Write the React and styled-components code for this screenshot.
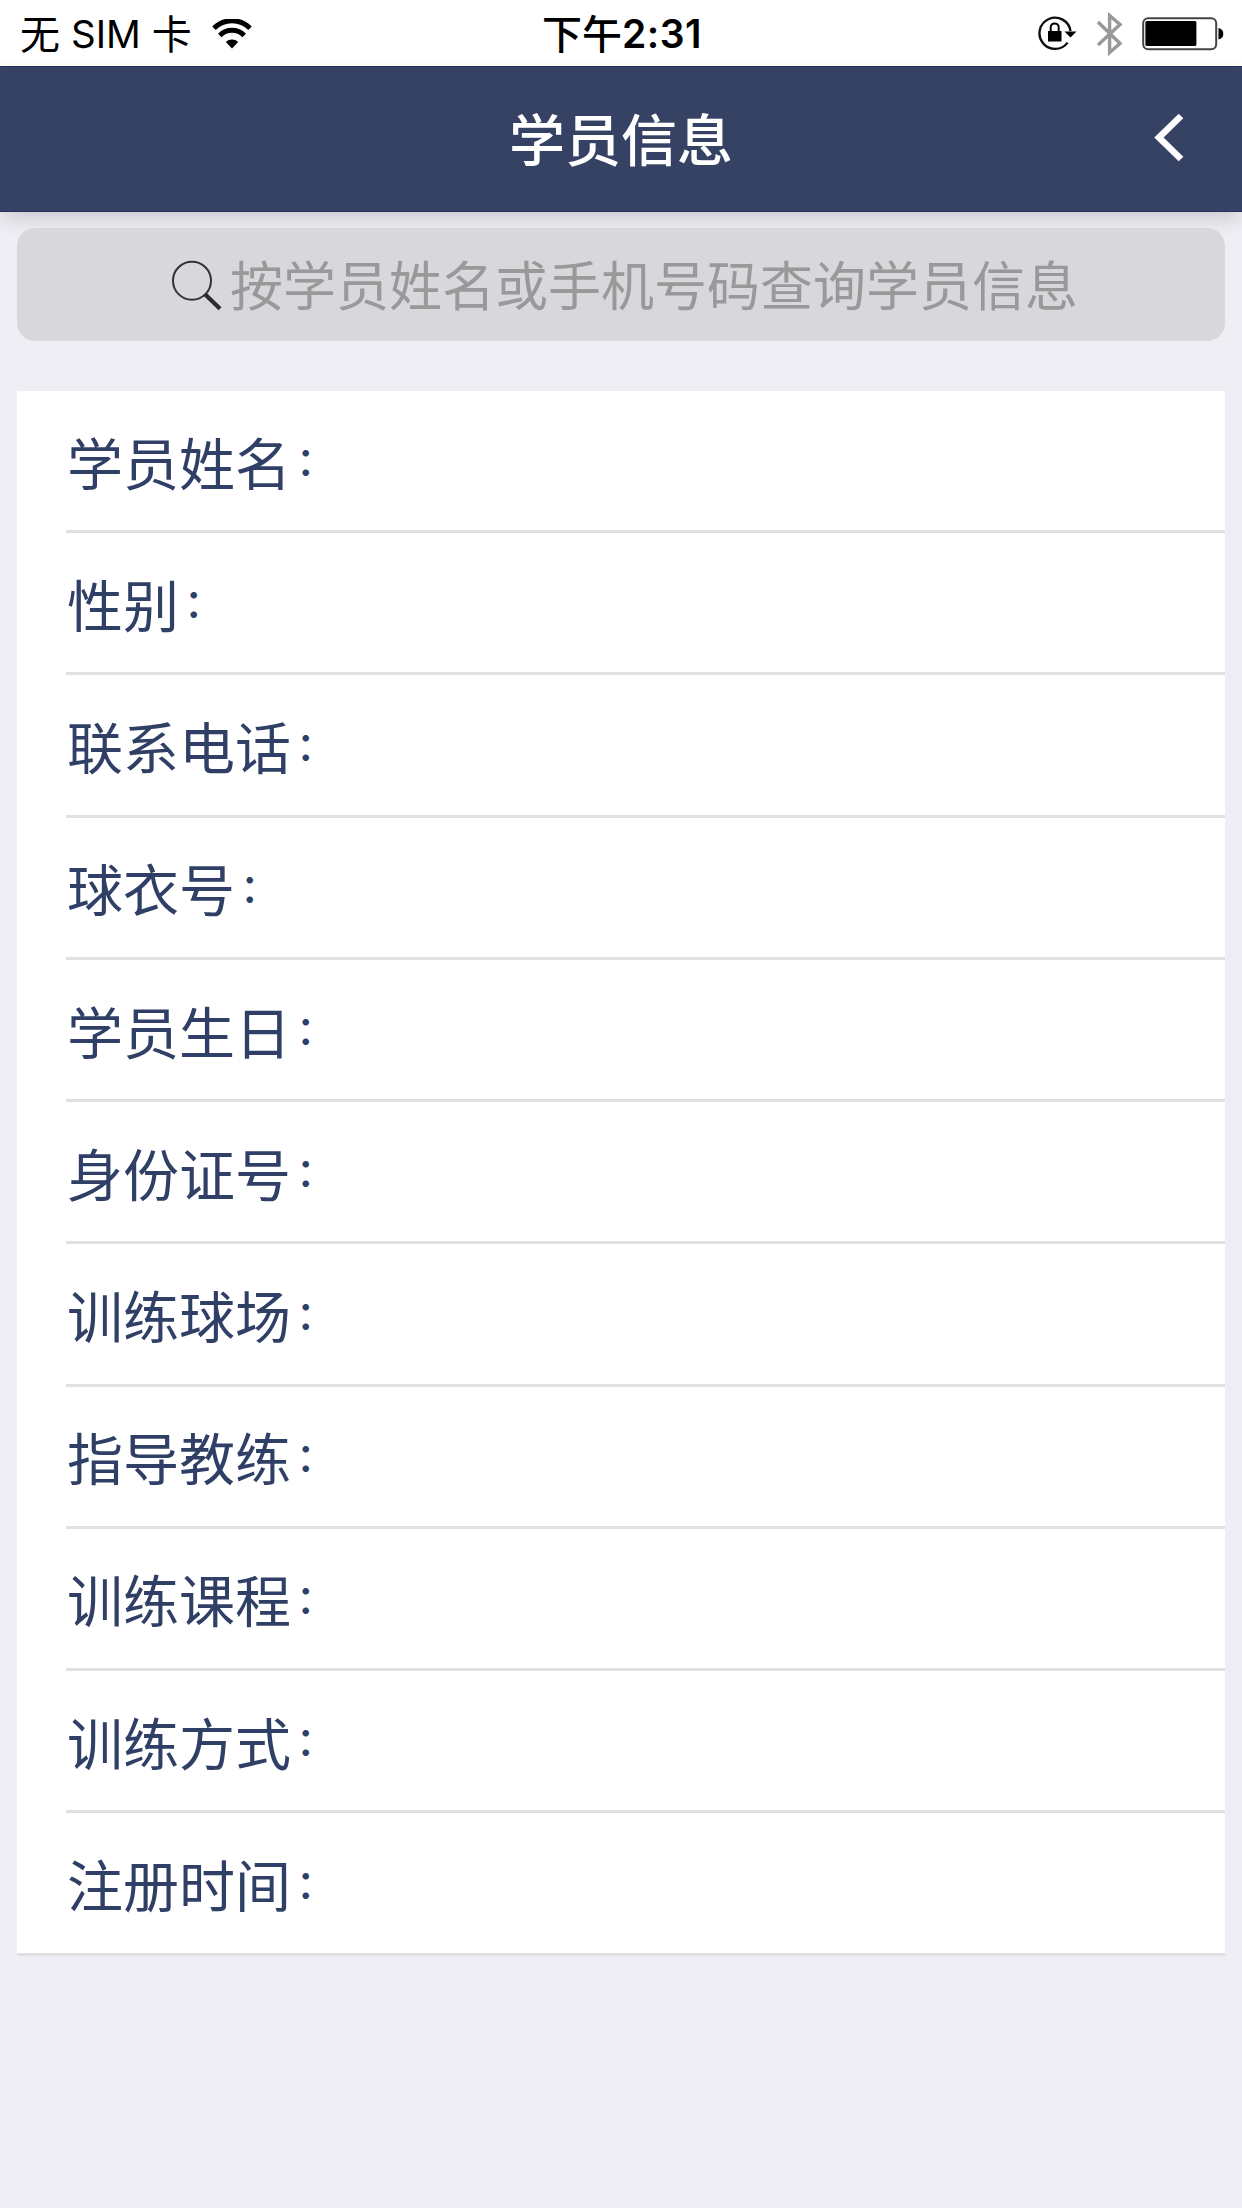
import React from "react";
import styled, { createGlobalStyle } from "styled-components";

const fields = [
  "学员姓名",
  "性别",
  "联系电话",
  "球衣号",
  "学员生日",
  "身份证号",
  "训练球场",
  "指导教练",
  "训练课程",
  "训练方式",
  "注册时间",
];

const App = () => {
  return (
    <Page>
      <GlobalStyle />
      <StatusBar>
        <Carrier>
          <StatusText>无</StatusText>
          <StatusText latin>SIM</StatusText>
          <StatusText>卡</StatusText>
          <WifiIcon />
        </Carrier>
        <Clock>
          <StatusText bold>下午</StatusText>
          <ClockDigits>2:31</ClockDigits>
        </Clock>
        <Indicators>
          <RotationLockIcon />
          <BluetoothIcon />
          <BatteryIcon />
        </Indicators>
      </StatusBar>

      <Header>
        <Title>学员信息</Title>
        <BackButton aria-label="返回">
          <svg width="32" height="52" viewBox="0 0 32 52">
            <path
              d="M27 4 L5 25.5 L27 47"
              fill="none"
              stroke="#fff"
              strokeWidth="6.6"
            />
          </svg>
        </BackButton>
      </Header>

      <SearchBox>
        <SearchIcon />
        <Placeholder>按学员姓名或手机号码查询学员信息</Placeholder>
      </SearchBox>

      <List>
        {fields.map((field) => (
          <Row key={field}>
            <Label>
              {field}
              <Colon>：</Colon>
            </Label>
          </Row>
        ))}
      </List>
    </Page>
  );
};

const WifiIcon = () => (
  <svg width="40" height="30" viewBox="0 0 40 30">
    <g fill="none" stroke="#000" strokeWidth="5">
      <path d="M2 9.2 A25.5 25.5 0 0 1 38 9.2" />
      <path d="M7.8 16.4 A17 17 0 0 1 32.2 16.4" />
    </g>
    <path d="M20 29.5 L13.8 23 A9 9 0 0 1 26.2 23 Z" />
  </svg>
);

const RotationLockIcon = () => (
  <svg width="40" height="36" viewBox="0 0 40 36">
    <path
      d="M32.5 15 A15.6 15.6 0 1 0 29.6 26.6"
      fill="none"
      stroke="#111"
      strokeWidth="2.4"
    />
    <path d="M26.5 15.5 H38.5 L32.5 21.5 Z" />
    <rect x="10" y="15" width="13.5" height="10.5" />
    <path
      d="M12.7 16 V11.4 A4 4 0 0 1 20.7 11.4 V16"
      fill="none"
      stroke="#000"
      strokeWidth="2"
    />
  </svg>
);

const BluetoothIcon = () => (
  <svg width="28" height="46" viewBox="0 0 28 46">
    <path
      d="M2 11 L24 32.5 L13.6 41.5 V4.5 L24 13.5 L2 34"
      fill="none"
      stroke="#999"
      strokeWidth="3.4"
    />
  </svg>
);

const BatteryIcon = () => (
  <svg width="82" height="34" viewBox="0 0 82 34">
    <rect x="1.2" y="1.2" width="73" height="31" rx="5" fill="#fff" stroke="#444" strokeWidth="2" />
    <rect x="3.4" y="4" width="51" height="25" rx="1.5" />
    <path d="M76.5 11 Q81.3 12 81.3 16.8 Q81.3 21.6 76.5 22.6 Z" />
  </svg>
);

const SearchIcon = () => (
  <svg width="52" height="52" viewBox="0 0 52 52">
    <circle cx="21" cy="21.7" r="19" fill="none" stroke="#333" strokeWidth="2" />
    <path d="M34 35.2 L49 49.7" stroke="#2b2b2b" strokeWidth="4.2" />
  </svg>
);

const GlobalStyle = createGlobalStyle`
  * {
    box-sizing: border-box;
  }
  body {
    margin: 0;
    background: #efeef4;
    font-family: "Noto Sans CJK SC", sans-serif;
  }
  svg {
    display: block;
    flex: none;
  }
`;

const Page = styled.div`
  width: 1242px;
  min-height: 2208px;
  background: #efeef4;
`;

const StatusBar = styled.div`
  display: grid;
  grid-template-columns: 1fr auto 1fr;
  align-items: center;
  height: 66px;
  padding: 1px 18px 0 20px;
  background: #fff;
  color: #000;
`;

const Carrier = styled.div`
  display: flex;
  align-items: center;
`;

const StatusText = styled.span`
  padding-bottom: ${(props) => (props.latin ? "0" : "4px")};
  font-family: ${(props) =>
    props.latin ? "Inter, sans-serif" : '"Noto Sans CJK SC", sans-serif'};
  font-size: ${(props) => (props.latin ? "38.5px" : "40px")};
  font-weight: ${(props) => (props.bold ? 500 : 400)};
  line-height: 62px;
  margin-right: ${(props) => (props.bold ? "0" : props.latin ? "11px" : "11px")};

  & + svg {
    margin-left: 9px;
  }
`;

const Clock = styled.div`
  display: flex;
  align-items: center;
`;

const ClockDigits = styled.span`
  font-family: Inter, sans-serif;
  font-size: 39px;
  font-weight: 600;
  letter-spacing: 0.5px;
  line-height: 62px;
`;

const Indicators = styled.div`
  display: flex;
  align-items: center;
  justify-content: flex-end;
  gap: 18px;
`;

const Header = styled.header`
  display: grid;
  grid-template-columns: 1fr auto 1fr;
  align-items: center;
  height: 146px;
  padding: 0 56px 3px;
  background: #354264;
  border-top: 1px solid #22305a;
  border-bottom: 1px solid #263259;
  box-shadow: 0 8px 20px -2px rgba(0, 0, 0, 0.16);
`;

const Title = styled.h1`
  grid-column: 2;
  margin: 0;
  padding-bottom: 2px;
  color: #fff;
  font-size: 56px;
  font-weight: 500;
  line-height: 80px;
`;

const BackButton = styled.button`
  justify-self: end;
  padding: 0;
  border: 0;
  background: none;
`;

const SearchBox = styled.div`
  display: flex;
  align-items: center;
  justify-content: center;
  height: 113px;
  margin: 16px 17px 50px;
  padding: 1px 0 0 7px;
  border-radius: 18px;
  background: #d8d7dc;
`;

const Placeholder = styled.span`
  margin-left: 7px;
  padding-bottom: 4px;
  color: #999;
  font-size: 53px;
  line-height: 80px;
`;

const List = styled.ul`
  margin: 0 17px;
  padding: 0;
  background: #fff;
  border-bottom: 3px solid #e0e0e2;
  list-style: none;
`;

const Row = styled.li`
  display: flex;
  align-items: center;
  height: 142.24px;
  margin-left: 49px;
  padding-left: 1px;
  border-bottom: 3px solid #e0e0e0;

  &:last-child {
    height: 139.6px;
    border-bottom: 0;
  }
`;

const Label = styled.span`
  display: flex;
  align-items: center;
  color: #2f3f66;
  font-size: 56px;
  line-height: 80px;
`;

/* smaller than the label so the two dots sit close together */
const Colon = styled.span`
  margin-left: 5px;
  padding-bottom: 5px;
  font-size: 39px;
  font-weight: 500;
  line-height: 60px;
`;

export default App;
